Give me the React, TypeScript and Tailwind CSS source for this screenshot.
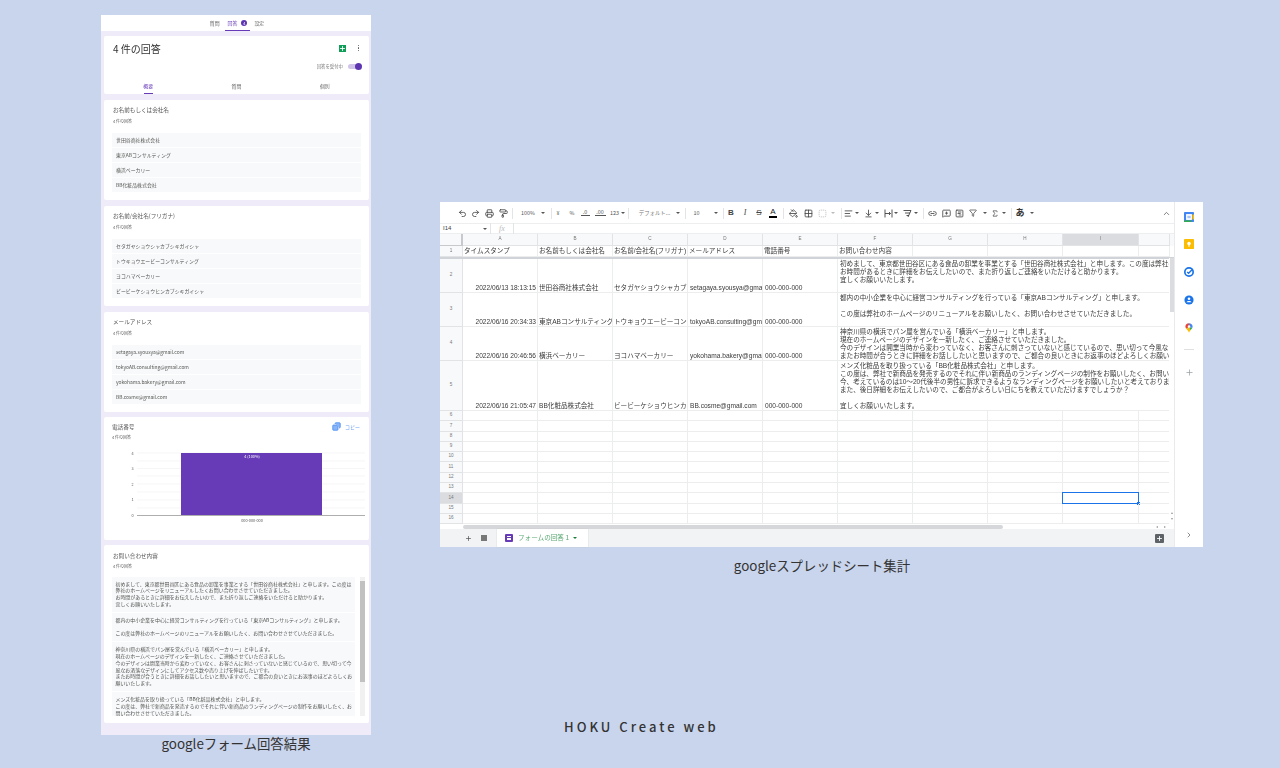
import type { ReactNode } from 'react';
import {
  AlignLeft,
  ArrowDownToLine,
  ChevronRight,
  ChevronUp,
  Copy,
  Filter,
  Grid2x2,
  Link2,
  MessageSquarePlus,
  PaintBucket,
  PaintRoller,
  Plus,
  Printer,
  Redo2,
  SquareChartGantt,
  SquareDashed,
  Sigma,
  Undo2,
} from 'lucide-react';

const names = ['世田谷商社株式会社', '東京ABコンサルティング', '横浜ベーカリー', 'BB化粧品株式会社'];
const kana = ['セタガヤショウシャカブシキガイシャ', 'トウキョウエービーコンサルティング', 'ヨコハマベーカリー', 'ビービーケショウヒンカブシキガイシャ'];
const mails = ['setagaya.syousya@gmail.com', 'tokyoAB.consulting@gmail.com', 'yokohama.bakery@gmail.com', 'BB.cosme@gmail.com'];

const formMessages = [
  [
    '初めまして、東京都世田谷区にある食品の卸業を事業とする「世田谷商社株式会社」と申します。この度は',
    '弊社のホームページをリニューアルしたくお問い合わせさせていただきました。',
    'お時間があるときに詳細をお伝えしたいので、また折り返しご連絡をいただけると助かります。',
    '宜しくお願いいたします。',
  ],
  [
    '都内の中小企業を中心に経営コンサルティングを行っている「東京ABコンサルティング」と申します。',
    '\u00a0',
    'この度は弊社のホームページのリニューアルをお願いしたく、お問い合わせさせていただきました。',
  ],
  [
    '神奈川県の横浜でパン屋を営んでいる「横浜ベーカリー」と申します。',
    '現在のホームページのデザインを一新したく、ご連絡させていただきました。',
    '今のデザインは開業当時から変わっていなく、お客さんに刺さっていないと感じているので、思い切って今',
    '風なお洒落なデザインにしてアクセス数や売り上げを伸ばしたいです。',
    'またお時間が合うときに詳細をお話ししたいと思いますので、ご都合の良いときにお返事のほどよろしくお',
    '願いいたします。',
  ],
  [
    'メンズ化粧品を取り扱っている「BB化粧品株式会社」と申します。',
    'この度は、弊社で新商品を発売するのでそれに伴い新商品のランディングページの制作をお願いしたく、お',
    '問い合わせさせていただきました。',
  ],
];

const sheetRows = [
  {
    n: 2,
    h: 'h-[34px]',
    time: '2022/06/13 18:13:15',
    name: names[0],
    kana: 'セタガヤショウシャカブシキガイシャ',
    mail: mails[0],
    msg: [
      '初めまして、東京都世田谷区にある食品の卸業を事業とする「世田谷商社株式会社」と申します。この度は弊社のホームページをリニューアルしたくお問い合わせさせていただきました。',
      'お時間があるときに詳細をお伝えしたいので、また折り返しご連絡をいただけると助かります。',
      '宜しくお願いいたします。',
    ],
  },
  {
    n: 3,
    h: 'h-[34px]',
    time: '2022/06/16 20:34:33',
    name: names[1],
    kana: 'トウキョウエービーコンサルティング',
    mail: mails[1],
    msg: [
      '都内の中小企業を中心に経営コンサルティングを行っている「東京ABコンサルティング」と申します。',
      '\u00a0',
      'この度は弊社のホームページのリニューアルをお願いしたく、お問い合わせさせていただきました。',
    ],
  },
  {
    n: 4,
    h: 'h-[34px]',
    time: '2022/06/16 20:46:56',
    name: names[2],
    kana: 'ヨコハマベーカリー',
    mail: mails[2],
    msg: [
      '神奈川県の横浜でパン屋を営んでいる「横浜ベーカリー」と申します。',
      '現在のホームページのデザインを一新したく、ご連絡させていただきました。',
      '今のデザインは開業当時から変わっていなく、お客さんに刺さっていないと感じているので、思い切って今風なお洒落なデザインにしてアクセス数や売り上げを伸ばしたいです。',
      'またお時間が合うときに詳細をお話ししたいと思いますので、ご都合の良いときにお返事のほどよろしくお願いいたします。',
    ],
  },
  {
    n: 5,
    h: 'h-[50px]',
    time: '2022/06/16 21:05:47',
    name: names[3],
    kana: 'ビービーケショウヒンカブシキガイシャ',
    mail: mails[3],
    msg: [
      'メンズ化粧品を取り扱っている「BB化粧品株式会社」と申します。',
      'この度は、弊社で新商品を発売するのでそれに伴い新商品のランディングページの制作をお願いしたく、お問い合わせさせていただきました。',
      '今、考えているのは10～20代後半の男性に訴求できるようなランディングページをお願いしたいと考えております。',
      'また、後日詳細をお伝えしたいので、ご都合がよろしい日にちを教えていただけますでしょうか？',
      '\u00a0',
      '宜しくお願いいたします。',
    ],
  },
];

const colLabels = ['A', 'B', 'C', 'D', 'E', 'F', 'G', 'H', 'I', ''];
const gridCols = 'grid grid-cols-[23px_75px_75px_75px_75px_75px_75px_75px_75px_76px_31px]';
const cell = 'overflow-hidden whitespace-nowrap border-r border-b border-[#eceded] text-[6.6px] leading-[8px] text-[#3a3a3a]';
const rowHead = 'flex items-center justify-center border-b border-r border-[#e2e3e5] text-[4.6px] text-[#777]';

function QuestionCard({ title, rows }: { title: string; rows: string[] }) {
  return (
    <div className="mt-[6px] h-[100px] rounded-[2px] bg-white pt-[6px]">
      <p className="pl-[9px] text-[5.6px] leading-[8px] text-[#555]">{title}</p>
      <p className="mt-[4px] pl-[9px] text-[4px] leading-[6px] text-[#666]">4 件の回答</p>
      <div className="ml-[8px] mr-[8px] mt-[9px] flex flex-col gap-px">
        {rows.map(row => (
          <div key={row} className="flex h-[14px] items-center bg-[#f8f9fa] pl-[4px] text-[4.9px] text-[#555]">
            {row}
          </div>
        ))}
      </div>
    </div>
  );
}

function PhoneChart() {
  const lines = [452, 460, 467.5, 475, 483, 491, 499, 507];
  return (
    <svg width="265" height="90" viewBox="104 450 265 90" className="mt-[11px] block">
      {lines.map(y => (
        <line key={y} x1="137" x2="365" y1={y} y2={y} stroke="#f0f0f0" strokeWidth="0.6" />
      ))}
      <rect x="181" y="452" width="141" height="62" fill="#673ab7" />
      <line x1="137" x2="365" y1="514.5" y2="514.5" stroke="#999" strokeWidth="0.8" />
      <text x="252" y="457" textAnchor="middle" fontSize="3.8" fill="#fff">4 (100%)</text>
      {[4, 3, 2, 1, 0].map((n, i) => (
        <text key={n} x="132.5" y={453.5 + i * 15.5} textAnchor="middle" fontSize="3.8" fill="#555">{n}</text>
      ))}
      <text x="252" y="520.5" textAnchor="middle" fontSize="3.8" fill="#555">000-000-000</text>
    </svg>
  );
}

function FormPanel() {
  return (
    <div className="flex h-[720px] w-[270px] flex-col bg-[#f0ebf8] font-['Noto_Sans_CJK_JP',sans-serif] blur-[0.3px]">
      <div className="flex h-[16px] items-center justify-center pl-[2px] bg-white text-[4.9px] text-[#666]">
        <span>質問</span>
        <span className="relative ml-[8px] flex h-[16px] items-center text-[#673ab7]">
          回答
          <span className="ml-[4px] flex h-[6px] w-[6px] items-center justify-center rounded-full bg-[#5e35b1] text-[4px] text-white">4</span>
          <span className="absolute -left-[3px] -right-[3px] bottom-0 h-px bg-[#673ab7]" />
        </span>
        <span className="ml-[7px]">設定</span>
      </div>

      <div className="flex flex-1 flex-col pl-[3px] pr-[2px]">
        <div className="mt-[5px] flex h-[58px] flex-col rounded-[2px] bg-white">
          <div className="flex h-[24px] items-center pl-[9px] pr-[10px]">
            <span className="text-[10px] text-[#333]">4 件の回答</span>
            <div className="ml-auto flex h-[7px] w-[7px] items-center justify-center bg-[#0f9d58]">
              <Plus size={7} strokeWidth={3} color="#fff" />
            </div>
            <div className="ml-[12px] flex flex-col gap-[1px]">
              <span className="h-[1.2px] w-[1.2px] rounded-full bg-[#555]" />
              <span className="h-[1.2px] w-[1.2px] rounded-full bg-[#555]" />
              <span className="h-[1.2px] w-[1.2px] rounded-full bg-[#555]" />
            </div>
          </div>
          <div className="mt-[3px] flex items-center justify-end pr-[8px]">
            <span className="text-[4.4px] text-[#777]">回答を受付中</span>
            <span className="relative ml-[5px] block h-[5px] w-[13px] rounded-full bg-[#d1c4e9]">
              <span className="absolute -right-px -top-[1px] h-[7px] w-[7px] rounded-full bg-[#5e35b1]" />
            </span>
          </div>
          <div className="mt-auto grid h-[17px] grid-cols-3 text-[4.9px] text-[#666]">
            <span className="relative flex items-center justify-center text-[#673ab7]">
              概要
              <span className="absolute bottom-0 left-[40px] h-[1px] w-[9px] bg-[#673ab7]" />
            </span>
            <span className="flex items-center justify-center">質問</span>
            <span className="flex items-center justify-center">個別</span>
          </div>
        </div>

        <QuestionCard title="お名前もしくは会社名" rows={names} />
        <QuestionCard title="お名前/会社名(フリガナ)" rows={kana} />
        <QuestionCard title="メールアドレス" rows={mails} />

        <div className="mt-[5px] h-[123px] rounded-[2px] bg-white pt-[5px]">
          <div className="flex items-center pl-[8px] pr-[9px]">
            <span className="text-[5.6px] leading-[8px] text-[#555]">電話番号</span>
            <Copy size={9} color="#4285f4" fill="#8ab4f8" strokeWidth={2} className="ml-auto -scale-x-100" />
            <span className="ml-[4px] text-[5px] text-[#6fa3f5]">コピー</span>
          </div>
          <p className="mt-[3px] pl-[8px] text-[4px] leading-[6px] text-[#666]">4 件の回答</p>
          <PhoneChart />
        </div>

        <div className="mt-[5px] flex h-[178px] flex-col rounded-[2px] bg-white pt-[7px]">
          <p className="pl-[9px] text-[5.6px] leading-[8px] text-[#555]">お問い合わせ内容</p>
          <p className="mt-[3px] pl-[9px] text-[4px] leading-[6px] text-[#666]">4 件の回答</p>
          <div className="ml-[8px] mr-[4px] mt-[8px] flex h-[139px] gap-[5px] overflow-hidden">
            <div className="flex w-[243px] flex-col gap-[1.5px] overflow-hidden">
              {formMessages.map((lines, i) => (
                <div key={i} className="shrink-0 bg-[#f8f9fa] px-[3.5px] py-[3.5px] text-[4.95px] leading-[6.9px] text-[#555]">
                  {lines.map((line, j) => (
                    <div key={j} className="whitespace-nowrap">{line}</div>
                  ))}
                </div>
              ))}
            </div>
            <div className="flex w-[5px] flex-col bg-[#f1f1f1]">
              <div className="h-[4px]" />
              <div className="h-[101px] bg-[#c1c1c1]" />
            </div>
          </div>
        </div>
      </div>
    </div>
  );
}

function Caret() {
  return <span className="block h-0 w-0 border-x-[2px] border-t-[2.5px] border-x-transparent border-t-[#555]" />;
}

function Sep({ className = '' }: { className?: string }) {
  return <span className={`block h-[11px] w-px shrink-0 bg-[#e3e4e6] ${className}`} />;
}

function T({ className, children }: { className: string; children?: ReactNode }) {
  return <span className={`flex shrink-0 items-center justify-center ${className}`}>{children}</span>;
}

function Toolbar() {
  const ic = { size: 9, color: '#444', strokeWidth: 2.2 };
  return (
    <div className="flex h-[21px] items-center bg-white pl-[16px] pt-[1px] text-[5.4px] text-[#555]">
      <T className="w-[13px]"><Undo2 {...ic} /></T>
      <T className="w-[13px]"><Redo2 {...ic} /></T>
      <T className="w-[14px]"><Printer {...ic} /></T>
      <T className="w-[14px]"><PaintRoller {...ic} /></T>
      <Sep className="ml-[2px]" />
      <T className="ml-[8px] w-[14px]">100%</T>
      <T className="ml-[6px] w-[4px]"><Caret /></T>
      <Sep className="ml-[6px]" />
      <T className="ml-[2px] w-[8px]">¥</T>
      <T className="ml-[6px] w-[8px]">%</T>
      <T className="ml-[4.5px] w-[9px] border-b border-[#555] leading-[5px]">.0</T>
      <T className="ml-[5px] w-[11px] border-b border-[#555] leading-[5px]">.00</T>
      <T className="ml-[3.5px] w-[11px]">123</T>
      <T className="ml-[1px] w-[4px]"><Caret /></T>
      <Sep className="ml-[3px]" />
      <T className="ml-[8px] w-[35px] text-[#777]">デフォルト...</T>
      <T className="ml-[4px] w-[4px]"><Caret /></T>
      <Sep className="ml-[5px]" />
      <T className="ml-[7px] w-[7px]">10</T>
      <T className="ml-[14px] w-[4px]"><Caret /></T>
      <Sep className="ml-[5px]" />
      <T className="ml-[3px] w-[8px] font-['Liberation_Sans',sans-serif] text-[8px] font-bold text-[#444]">B</T>
      <T className="ml-[6px] w-[8px] font-['Liberation_Serif',serif] text-[8px] italic text-[#444]">I</T>
      <T className="ml-[6px] w-[8px] font-['Liberation_Sans',sans-serif] text-[8px] line-through text-[#444]">S</T>
      <T className="ml-[6px] w-[8px] flex-col font-['Liberation_Sans',sans-serif] text-[8px] leading-[8px] text-[#222]">
        A
        <span className="block h-[1.5px] w-[8px] bg-black" />
      </T>
      <Sep className="ml-[6px]" />
      <T className="ml-[4.5px] w-[9px]"><PaintBucket {...ic} /></T>
      <T className="ml-[6px] w-[9px]"><Grid2x2 {...ic} /></T>
      <T className="ml-[5px] w-[9px]"><SquareDashed size={9} color="#bbb" strokeWidth={2} /></T>
      <T className="ml-[4.5px] w-[4px] opacity-40"><Caret /></T>
      <Sep className="ml-[6px]" />
      <T className="ml-[1.5px] w-[9px]"><AlignLeft {...ic} /></T>
      <T className="ml-[2.5px] w-[4px]"><Caret /></T>
      <T className="ml-[4.5px] w-[9px]"><ArrowDownToLine {...ic} /></T>
      <T className="ml-[2.5px] w-[4px]"><Caret /></T>
      <T className="ml-[4.5px] w-[9px]">
        <svg width="9" height="9" viewBox="0 0 9 9" fill="none" stroke="#444" strokeWidth="0.9">
          <path d="M1 0.5 V8.5 M8 0.5 V8.5 M1 4.5 H6.5 M5 3 L6.5 4.5 L5 6" />
        </svg>
      </T>
      <T className="ml-[1.5px] w-[4px]"><Caret /></T>
      <T className="ml-[4.5px] w-[9px]">
        <svg width="9" height="9" viewBox="0 0 9 9" fill="none" stroke="#444" strokeWidth="0.9">
          <path d="M0.5 1.5 H8 M2 4 L7 4 M3.5 6.5 L6 6.5 M8 1.5 L5 8" />
        </svg>
      </T>
      <T className="ml-[2.5px] w-[4px]"><Caret /></T>
      <Sep className="ml-[5px]" />
      <T className="ml-[3px] w-[10px]"><Link2 {...ic} /></T>
      <T className="ml-[4.5px] w-[9px]"><MessageSquarePlus {...ic} /></T>
      <T className="ml-[4px] w-[9px]"><SquareChartGantt {...ic} /></T>
      <T className="ml-[5.5px] w-[8px]"><Filter size={8} color="#444" strokeWidth={2.2} /></T>
      <T className="ml-[6px] w-[4px]"><Caret /></T>
      <T className="ml-[4px] w-[8px]"><Sigma {...ic} /></T>
      <T className="ml-[3px] w-[4px]"><Caret /></T>
      <Sep className="ml-[5px]" />
      <T className="ml-[3.5px] w-[9px] text-[9px] font-bold text-[#333]">あ</T>
      <T className="ml-[5.5px] w-[4px]"><Caret /></T>
      <T className="ml-auto mr-[3px] w-[10px]"><ChevronUp size={9} color="#555" strokeWidth={2} /></T>
    </div>
  );
}

function SideIcons() {
  return (
    <div className="flex w-[28px] flex-col items-center bg-white pt-[10px]">
      <svg width="10" height="10" viewBox="0 0 12 12">
        <rect width="12" height="12" rx="1" fill="#4285f4" />
        <rect x="2.5" y="2.5" width="7" height="7" fill="#fff" />
        <rect y="10" width="9" height="2" fill="#34a853" />
        <rect x="10" y="3" width="2" height="6" fill="#fbbc04" />
        <rect x="4" y="4.5" width="4" height="3" fill="#a9c6f8" />
      </svg>
      <svg width="10" height="10" viewBox="0 0 12 12" className="mt-[17px]">
        <rect width="12" height="12" rx="1" fill="#fbbc04" />
        <circle cx="6" cy="5.3" r="2.1" fill="#fff" />
        <rect x="5" y="7.6" width="2" height="1.4" fill="#fff" />
      </svg>
      <svg width="10" height="10" viewBox="0 0 12 12" className="mt-[18px]">
        <circle cx="6" cy="6" r="5" fill="none" stroke="#1a73e8" strokeWidth="2" />
        <path d="M3.8 6 L5.5 7.6 L10.5 2.5" fill="none" stroke="#1a73e8" strokeWidth="1.6" />
      </svg>
      <svg width="10" height="10" viewBox="0 0 12 12" className="mt-[18px]">
        <circle cx="6" cy="6" r="5.5" fill="#1a73e8" />
        <circle cx="6" cy="4.5" r="1.6" fill="#fff" />
        <path d="M3 8.6 C3.6 6.8 8.4 6.8 9 8.6 Z" fill="#fff" />
      </svg>
      <svg width="8" height="10" viewBox="0 0 10 12" className="mt-[18px]">
        <path d="M5 0 C2 0 .5 2 .5 4.2 C.5 5.4 1 6.2 1.6 7 L5 4.6 Z" fill="#ea4335" />
        <path d="M5 0 C7.5 0 9.5 2 9.5 4.2 C9.5 5 9.3 5.6 9 6.1 L5 4.6 Z" fill="#4285f4" />
        <path d="M1.6 7 C2.8 8.5 4.4 10 5 12 C5.3 10.8 6 9.8 6.8 8.8 L5 4.6 Z" fill="#fbbc04" />
        <path d="M5 4.6 L9 6.1 C8.4 7.2 7.5 8 6.8 8.8 Z" fill="#34a853" />
        <circle cx="5" cy="4.2" r="1.5" fill="#fff" />
      </svg>
      <span className="mt-[16px] block h-px w-[10px] bg-[#e0e0e0]" />
      <Plus size={9} color="#9aa0a6" strokeWidth={2} className="mt-[18px]" />
      <ChevronRight size={8} color="#555" strokeWidth={2} className="mt-auto mb-[8px]" />
    </div>
  );
}

function SheetGrid() {
  const blankRows = [6, 7, 8, 9, 10, 11, 12, 13, 14, 15, 16];
  return (
    <div className="relative flex-1 overflow-hidden font-['Liberation_Sans','Noto_Sans_CJK_JP',sans-serif]">
      <div className={`${gridCols} h-[12px] bg-[#f8f9fa] text-[4.6px] text-[#777]`}>
        <div className="border-b border-r-2 border-[#c7c9cc]" />
        {colLabels.map((c, i) => (
          <div key={i} className={`flex items-center justify-center border-b border-r border-[#e2e3e5] ${c === 'I' ? 'bg-[#dadce0]' : ''}`}>
            {c}
          </div>
        ))}
      </div>

      <div className={`${gridCols} h-[13px] border-b-2 border-[#d0d3d8]`}>
        <div className={`${rowHead} bg-[#f8f9fa]`}>1</div>
        {['タイムスタンプ', 'お名前もしくは会社名', 'お名前/会社名(フリガナ)', 'メールアドレス', '電話番号', 'お問い合わせ内容', '', '', '', ''].map((t, i) => (
          <div key={i} className={`${cell} flex items-center pl-[1px]`}>{t}</div>
        ))}
      </div>

      {sheetRows.map(row => (
        <div key={row.n} className={`${gridCols} ${row.h}`}>
          <div className={`${rowHead} bg-[#f8f9fa]`}>{row.n}</div>
          <div className={`${cell} flex items-end justify-end pr-[1px]`}>{row.time}</div>
          <div className={`${cell} flex items-end pl-[1px]`}>{row.name}</div>
          <div className={`${cell} flex items-end pl-[1px]`}>{row.kana}</div>
          <div className={`${cell} flex items-end pl-[2px]`}>{row.mail}</div>
          <div className={`${cell} flex items-end pl-[2px]`}>000-000-000</div>
          <div className={`${cell} col-span-5 pl-[2px] pt-px leading-[8.3px]`}>
            {row.msg.map((line, i) => (
              <div key={i}>{line}</div>
            ))}
          </div>
        </div>
      ))}

      {blankRows.map(n => (
        <div key={n} className={`${gridCols} h-[10.3px]`}>
          <div className={`${rowHead} ${n === 14 ? 'bg-[#dadce0]' : 'bg-[#f8f9fa]'}`}>{n}</div>
          {colLabels.map((c, i) => (
            <div key={i} className="relative border-b border-r border-[#eceded]">
              {n === 14 && c === 'I' && (
                <span className="absolute -inset-px border border-[#1a73e8]">
                  <span className="absolute -bottom-[2px] -right-[2px] h-[3px] w-[3px] bg-[#1a73e8]" />
                </span>
              )}
            </div>
          ))}
        </div>
      ))}

      <div className="absolute bottom-0 right-0 top-[24px] flex w-[5px] flex-col items-center bg-white">
        <div className="h-[54px] w-[4px] bg-[#dadce0]" />
        <span className="mt-auto mb-[4px] block h-0 w-0 border-x-[1.5px] border-b-[2px] border-x-transparent border-b-[#999]" />
        <span className="mb-[4px] block h-0 w-0 border-x-[1.5px] border-t-[2px] border-x-transparent border-t-[#999]" />
      </div>
    </div>
  );
}

function Sheet() {
  return (
    <div className="flex h-[345px] w-[763px] bg-white">
      <div className="flex w-[735px] flex-col border-r border-[#e8eaed]">
        <Toolbar />
        <div className="flex h-[11px] items-center border-y border-[#eceef0] font-['Liberation_Sans',sans-serif] text-[6px] text-[#444]">
          <span className="ml-[3px] w-[40px]">I14</span>
          <Caret />
          <Sep className="ml-[3px] h-[8px]" />
          <span className="ml-[8px] w-[14px] font-['Liberation_Serif',serif] text-[8px] italic text-[#bbb]">fx</span>
          <Sep className="h-[8px]" />
        </div>
        <SheetGrid />
        <div className="flex h-[5px] items-center bg-white">
          <div className="ml-[23px] h-[4px] w-[540px] rounded-full bg-[#d5d7da]" />
          <span className="ml-auto mr-[6px] block h-0 w-0 border-y-[1.5px] border-r-[2px] border-y-transparent border-r-[#999]" />
          <span className="mr-[8px] block h-0 w-0 border-y-[1.5px] border-l-[2px] border-y-transparent border-l-[#999]" />
        </div>
        <div className="flex h-[18px] items-stretch bg-[#f1f3f4]">
          <T className="ml-[24px] w-[9px]"><Plus size={7} color="#555" strokeWidth={2.5} /></T>
          <T className="ml-[6px] w-[9px]"><span className="block h-[6px] w-[6px] bg-[#777]" /></T>
          <div className="ml-[9px] flex w-[91px] items-center bg-white pl-[8px] font-['Noto_Sans_CJK_JP',sans-serif] shadow-[0_0_1px_#bbb]">
            <span className="flex h-[8px] w-[8px] flex-col items-center justify-center gap-[0.8px] rounded-[1px] bg-[#673ab7]">
              <span className="block h-[0.8px] w-[4px] bg-white" />
              <span className="block h-[0.8px] w-[4px] bg-white" />
              <span className="block h-[0.8px] w-[4px] bg-white" />
            </span>
            <span className="ml-[5px] text-[6.6px] text-[#5aa872]">フォームの回答 1</span>
            <span className="ml-[4px] block h-0 w-0 border-x-[2px] border-t-[2.5px] border-x-transparent border-t-[#188038]" />
          </div>
          <T className="ml-auto mr-[10px] w-[9px]">
            <span className="flex h-[9px] w-[9px] items-center justify-center rounded-[1px] bg-[#5f6368]">
              <Plus size={7} color="#fff" strokeWidth={3} />
            </span>
          </T>
        </div>
      </div>
      <SideIcons />
    </div>
  );
}

export default function App() {
  return (
    <div className="flex h-[768px] w-[1280px] overflow-hidden bg-[#c9d5ec] font-['Noto_Sans_CJK_JP',sans-serif] text-[#333]">
      <div className="ml-[101px] mt-[15px] w-[270px]">
        <FormPanel />
        <p className="mt-[-1px] text-center text-[13.4px] leading-[18px] text-[#333]">googleフォーム回答結果</p>
      </div>
      <div className="ml-[69px] mt-[202px] w-[763px]">
        <div className="blur-[0.3px]">
          <Sheet />
        </div>
        <p className="mt-[9px] pl-[1px] text-center text-[13.4px] leading-[18px] text-[#333]">googleスプレッドシート集計</p>
        <p className="ml-[124px] mt-[144px] text-[13px] font-medium leading-[18px] tracking-[3px] text-[#333]">HOKU Create web</p>
      </div>
    </div>
  );
}
